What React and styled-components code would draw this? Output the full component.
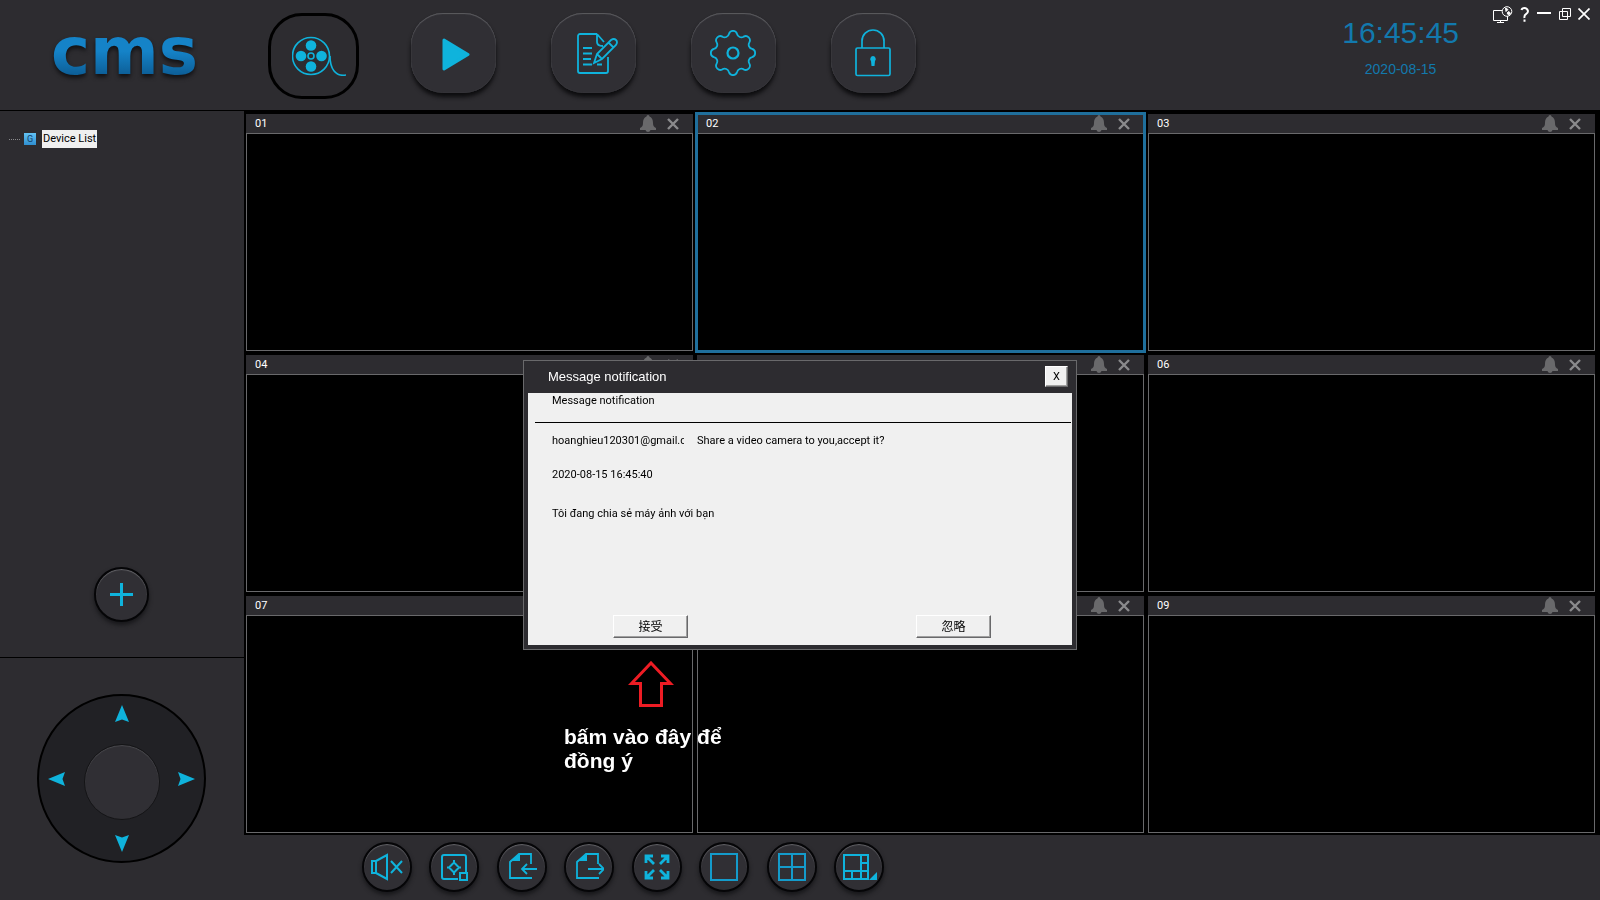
import React, { useState } from 'react';
import styled, { createGlobalStyle, css } from 'styled-components';

const channels = ['01', '02', '03', '04', '05', '06', '07', '08', '09'];

export default function App() {
    const [page, setPage] = useState('live');
    const [selected, setSelected] = useState('02');

    return (
        <>
            <GlobalStyle />
            <Page>
                <Header>
                    <Brand><Logo>cms</Logo></Brand>
                    <Nav>
                        {navItems.map((item) => (
                            <NavSlot key={item.id}>
                                <NavButton
                                    aria-label={item.label}
                                    $active={page === item.id}
                                    onClick={() => setPage(item.id)}
                                >
                                    {item.icon}
                                </NavButton>
                            </NavSlot>
                        ))}
                    </Nav>
                    <Clock>
                        <Time>16:45:45</Time>
                        <DateText>2020-08-15</DateText>
                    </Clock>
                    <WindowButtons>
                        <WindowButton aria-label="Remote"><RemoteIcon /></WindowButton>
                        <WindowButton aria-label="Help"><HelpIcon /></WindowButton>
                        <WindowButton aria-label="Minimize"><MinimizeIcon /></WindowButton>
                        <WindowButton aria-label="Restore"><RestoreIcon /></WindowButton>
                        <WindowButton aria-label="Close"><CloseIcon /></WindowButton>
                    </WindowButtons>
                </Header>

                <Content>
                    <Sidebar>
                        <DevicePanel>
                            <TreeItem>
                                <TreeLine />
                                <GroupIcon>G</GroupIcon>
                                <TreeLabel>Device List</TreeLabel>
                            </TreeItem>
                            <RoundButton $size={55} aria-label="Add device">
                                <svg width="23" height="23" viewBox="0 0 23 23" stroke="#0fb3dc" strokeWidth="3">
                                    <path d="M11.500 0v23M0 11.500h23" />
                                </svg>
                            </RoundButton>
                        </DevicePanel>
                        <PtzPanel>
                            <PtzWheel>
                                <PtzButton $area="up" aria-label="Up"><PtzArrow angle={0} /></PtzButton>
                                <PtzButton $area="left" aria-label="Left"><PtzArrow angle={270} /></PtzButton>
                                <PtzKnob />
                                <PtzButton $area="right" aria-label="Right"><PtzArrow angle={90} /></PtzButton>
                                <PtzButton $area="down" aria-label="Down"><PtzArrow angle={180} /></PtzButton>
                            </PtzWheel>
                        </PtzPanel>
                    </Sidebar>

                    <Main>
                        <VideoGrid>
                            {channels.map((name) => (
                                <Channel
                                    key={name}
                                    $selected={selected === name}
                                    onClick={() => setSelected(name)}
                                >
                                    <ChannelBar>
                                        <ChannelName>{name}</ChannelName>
                                        <ChannelButton aria-label={'Alarm ' + name}><BellIcon /></ChannelButton>
                                        <ChannelButton aria-label={'Close ' + name}><CrossIcon /></ChannelButton>
                                    </ChannelBar>
                                    <Video />
                                </Channel>
                            ))}
                        </VideoGrid>
                        <Toolbar>
                            {tools.map((tool) => (
                                <RoundButton key={tool.label} $size={50} aria-label={tool.label}>
                                    {tool.icon}
                                </RoundButton>
                            ))}
                        </Toolbar>
                    </Main>
                </Content>
            </Page>

            <Overlay>
                <Stack>
                    <Dialog role="dialog" aria-label="Message notification">
                        <DialogTitle>
                            <span>Message notification</span>
                            <DialogClose aria-label="Close dialog">X</DialogClose>
                        </DialogTitle>
                        <DialogBody>
                            <Subject>Message notification</Subject>
                            <Message>
                                <Request>
                                    <Sender>hoanghieu120301@gmail.com</Sender>
                                    <span>Share a video camera to you,accept it?</span>
                                </Request>
                                <span>2020-08-15 16:45:40</span>
                                <Note>Tôi đang chia sẻ máy ảnh với bạn</Note>
                            </Message>
                            <Actions>
                                <ClassicButton>接受</ClassicButton>
                                <ClassicButton>忽略</ClassicButton>
                            </Actions>
                        </DialogBody>
                    </Dialog>
                    <Hint>
                        <HintArrow width="46" height="46" viewBox="0 0 46 46" fill="none" stroke="#ed1c24" strokeWidth="3">
                            <path d="M23 2L42.500 22.500H33.500V44.500H12.500V22.500H3.500Z" />
                        </HintArrow>
                        <HintText>bấm vào đây để đồng ý</HintText>
                    </Hint>
                </Stack>
            </Overlay>
        </>
    );
}

const cyan = '#0fb3dc';

// outline of a wheel with eight rounded teeth
function gearPath(center, radius) {
    const point = (deg) => {
        const rad = (deg * Math.PI) / 180;
        return `${(center + radius * Math.cos(rad)).toFixed(2)} ${(center + radius * Math.sin(rad)).toFixed(2)}`;
    };
    let d = `M${point(-12)}`;
    for (let i = 0; i < 8; i++) {
        d += `A4.2 4.2 0 0 1 ${point(i * 45 + 12)}A4.4 4.4 0 0 0 ${point(i * 45 + 33)}`;
    }
    return d + 'Z';
}

function Icon({ size, width = 2, children }) {
    return (
        <svg width={size} height={size} viewBox={`0 0 ${size} ${size}`} fill="none" stroke={cyan} strokeWidth={width}>
            {children}
        </svg>
    );
}

const navItems = [
    {
        id: 'live', label: 'Live view', icon: (
            <svg width="54" height="40" viewBox="0 0 54 40" fill="none" stroke={cyan} strokeWidth="1.600">
                <circle cx="19" cy="20" r="18.500" />
                <circle cx="19" cy="20" r="3" />
                <g fill={cyan} stroke="none">
                    <circle cx="19" cy="9.500" r="5.300" />
                    <circle cx="19" cy="30.500" r="5.300" />
                    <circle cx="9" cy="20" r="5.300" />
                    <circle cx="29.500" cy="20" r="5.300" />
                </g>
                <path d="M38 20c0 12 5 21 16 19" />
            </svg>
        ),
    },
    {
        id: 'playback', label: 'Playback', icon: (
            <svg width="34" height="36" viewBox="0 0 34 36">
                <path d="M8 5L32 19.500L8 34Z" fill={cyan} stroke={cyan} strokeWidth="3" strokeLinejoin="round" />
            </svg>
        ),
    },
    {
        id: 'log', label: 'Log', icon: (
            <svg width="50" height="42" viewBox="-7 0 50 42" fill="none" stroke={cyan} strokeWidth="1.800">
                <path d="M22 2H5a2 2 0 0 0-2 2v35a2 2 0 0 0 2 2h26a2 2 0 0 0 2-2V25" />
                <path d="M22 2v8c0 3 2 4 6 4M22 2l7 8" />
                <path d="M8 16h9M8 21.500h9M8 27h8M8 32.500h9M22 32.500h5" />
                <path d="M19 31l3-9 14-14q3-2 5 0t0 5l-14 14zM22 22l5 5M33 10l6 6" />
            </svg>
        ),
    },
    {
        id: 'settings', label: 'Settings', icon: (
            <Icon size={46} width={1.8}>
                <path d={gearPath(23, 19.500)} />
                <circle cx="23" cy="23" r="5.500" strokeWidth="2.200" />
            </Icon>
        ),
    },
    {
        id: 'lock', label: 'Lock', icon: (
            <svg width="36" height="48" viewBox="0 0 36 48" fill="none" stroke={cyan} strokeWidth="1.700">
                <rect x="1" y="19" width="34" height="27.500" rx="1.500" />
                <path d="M7 19V12a11 11 0 0 1 22 0v7" />
                <path d="M18 27a3 3 0 0 1 2 5l-.5 5h-3l-.5-5a3 3 0 0 1 2-5z" fill={cyan} stroke="none" />
            </svg>
        ),
    },
];

const tools = [
    {
        label: 'Mute', icon: (
            <Icon size={32}>
                <path d="M1 10h4v12H1zM5 10l11-6v24L5 22M20 10l11 12M31 10L20 22" />
            </Icon>
        ),
    },
    {
        label: 'Locate', icon: (
            <Icon size={28}>
                <path d="M18 26H4q-2 0-2-2V4q0-2 2-2h20q2 0 2 2v15" />
                <path d="M14 9.500L19 14.500L14 19.500L9 14.500ZM14 7v3M14 19v3M7 14.500h3M18 14.500h3" />
                <rect x="20" y="20" width="7" height="7" />
            </Icon>
        ),
    },
    {
        label: 'Import', icon: (
            <Icon size={30} width={1.8}>
                <path d="M24 12V2H12L3 10V26H25" />
                <path d="M13 2v7H3z" fill={cyan} stroke="none" />
                <path d="M30 17H15M20 12l-5 5 5 5" />
            </Icon>
        ),
    },
    {
        label: 'Export', icon: (
            <Icon size={30} width={1.8}>
                <path d="M24 12V2H12L3 10V26H25" />
                <path d="M13 2v7H3z" fill={cyan} stroke="none" />
                <path d="M14 17H30M25 12l5 5-5 5" />
            </Icon>
        ),
    },
    {
        label: 'Full screen', icon: (
            <Icon size={28} width={2.8}>
                <path d="M3 10V3h7M3 3l8 8M18 3h7v7M25 3l-8 8M3 18v7h7M3 25l8-8M25 18v7h-7M25 25l-8-8" />
            </Icon>
        ),
    },
    {
        label: 'Single view', icon: (
            <Icon size={28}>
                <rect x="1" y="1" width="26" height="26" stroke="#149bcb" />
            </Icon>
        ),
    },
    {
        label: 'Four views', icon: (
            <Icon size={28}>
                <path d="M1 1h26v26H1zM14 1v26M1 14h26" stroke="#149bcb" />
            </Icon>
        ),
    },
    {
        label: 'More views', icon: (
            <svg width="36" height="26" viewBox="-2 0 36 26" fill="none" stroke={cyan} strokeWidth="2">
                <path d="M1 1h24v24H1zM18 1v24M1 17h24M18 9h7M9 17v8" />
                <path d="M34 18v8h-8z" fill={cyan} stroke="none" />
            </svg>
        ),
    },
];

function PtzArrow({ angle }) {
    return (
        <svg width="18" height="18" viewBox="0 0 18 18">
            <path d="M9 0L16 17L9 14.500L2 17Z" fill={cyan} transform={`rotate(${angle} 9 9)`} />
        </svg>
    );
}

function BellIcon() {
    return (
        <svg width="16" height="17" viewBox="0 0 16 17" fill="#69696b">
            <path d="M8 0q1.500 0 1.500 1.500C12 2.500 13 5 13 8c0 3 1 4 3 5v2h-5.500q-.5 2-2.500 2t-2.500-2H0v-2c2-1 3-2 3-5 0-3 1-5.500 3.500-6.500Q6.500 0 8 0z" />
        </svg>
    );
}

function CrossIcon() {
    return (
        <svg width="12" height="12" viewBox="0 0 12 12" stroke="#8a8a8c" strokeWidth="2.400">
            <path d="M1 1l10 10M11 1L1 11" />
        </svg>
    );
}

function RemoteIcon() {
    return (
        <svg width="20" height="17" viewBox="0 0 20 17" fill="none" stroke="#fff">
            <path d="M9 4.500H.5v10h14V10M7.500 14.500v2M4 16.500h7" />
            <circle cx="14" cy="5.500" r="4.800" />
            <path d="M12.500 2l2.500 1.500-2 2zM14 7l2-1.500 1.500 2-2 1.500z" fill="#fff" />
        </svg>
    );
}

function HelpIcon() {
    return (
        <svg width="10" height="15" viewBox="0 0 10 15" fill="none" stroke="#fff" strokeWidth="2">
            <path d="M1.500 3Q2 1 4.500 1T8 4Q8 6 6 7.200T4.500 11M4.500 12.500v2.200" />
        </svg>
    );
}

function MinimizeIcon() {
    return (
        <svg width="15" height="14" viewBox="0 0 15 14" stroke="#fff" strokeWidth="2">
            <path d="M0 6h14" />
        </svg>
    );
}

function RestoreIcon() {
    return (
        <svg width="12" height="12" viewBox="0 0 12 12" fill="none" stroke="#fff">
            <path d="M3.500 .5h8v8h-8zM.5 3.500h8v8h-8z" />
        </svg>
    );
}

function CloseIcon() {
    return (
        <svg width="12" height="12" viewBox="0 0 12 12" stroke="#fff" strokeWidth="1.700">
            <path d="M.5 .5l11 11M11.500 .5l-11 11" />
        </svg>
    );
}

const uiFont = 'Roboto, "Noto Sans CJK SC", sans-serif';

const GlobalStyle = createGlobalStyle`
  * {
    box-sizing: border-box;
  }
  body {
    margin: 0;
    background: #2d2c30;
    color: #fff;
    font-family: ${uiFont};
    font-size: 11px;
    line-height: 14px;
  }
  button {
    padding: 0;
    border: 0;
    background: none;
    color: inherit;
    font: inherit;
    cursor: pointer;
  }
  svg {
    display: block;
  }
`;

const Page = styled.div`
  display: flex;
  flex-direction: column;
  min-height: 100vh;
`;

const Header = styled.header`
  display: flex;
  height: 111px;
  border-bottom: 1px solid #000;
`;

const Brand = styled.div`
  display: flex;
  justify-content: center;
  width: 243px;
  padding: 12px 0 0 6px;
`;

const Logo = styled.div`
  font-family: "DejaVu Sans", sans-serif;
  font-size: 66px;
  font-weight: bold;
  line-height: 80px;
  color: transparent;
  background: linear-gradient(#1583c8 40%, #06406f 84%);
  background-clip: text;
  filter: drop-shadow(0 3px 2px #111114);
`;

const Nav = styled.nav`
  display: flex;
  padding-top: 13px;
`;

const NavSlot = styled.div`
  display: flex;
  justify-content: center;
  align-items: flex-start;
  width: 140px;
`;

const NavButton = styled.button`
  display: flex;
  justify-content: center;
  align-items: center;
  width: 85px;
  height: 80px;
  border-radius: 32px;
  background: #302f34;
  box-shadow: inset 0 1px 1px #5c5c60, inset 0 0 1px #55555a, 0 4px 4px #0c0c0e;

  ${(props) => props.$active && css`
    width: 91px;
    height: 86px;
    padding-left: 12px;
    border: 3px solid #000;
    border-radius: 34px;
    background: #2d2c30;
    box-shadow: none;
  `}
`;

const Clock = styled.div`
  display: flex;
  flex-direction: column;
  align-items: center;
  gap: 10px;
  margin-left: auto;
  padding-top: 16px;
  font-family: "Liberation Sans", Arial, sans-serif;
  color: #1279ad;
`;

const Time = styled.div`
  font-size: 30px;
  line-height: 34px;
`;

const DateText = styled.div`
  font-size: 14px;
  line-height: 18px;
`;

const WindowButtons = styled.div`
  display: flex;
  gap: 7px;
  padding: 6px 10px 0 34px;
`;

const WindowButton = styled.button`
  display: flex;
  align-items: center;
  height: 16px;
`;

const Content = styled.div`
  display: flex;
  flex: 1;
`;

const Sidebar = styled.aside`
  display: flex;
  flex-direction: column;
  width: 244px;
`;

const DevicePanel = styled.div`
  display: flex;
  flex: 1;
  flex-direction: column;
  justify-content: space-between;
  align-items: center;
  padding: 19px 1px 35px 0;
  border-bottom: 1px solid #000;
`;

const TreeItem = styled.div`
  display: flex;
  align-self: stretch;
  align-items: center;
  padding-left: 9px;
`;

const TreeLine = styled.div`
  width: 11px;
  margin-right: 4px;
  border-top: 1px dotted #8a8a8c;
`;

const GroupIcon = styled.div`
  width: 12px;
  height: 12px;
  margin-right: 6px;
  background: linear-gradient(#63c3f5, #2f8fd0);
  color: #123c66;
  font-size: 9px;
  line-height: 12px;
  text-align: center;
`;

const TreeLabel = styled.div`
  padding: 0 1px;
  background: #f0f0f0;
  color: #000;
  line-height: 18px;
`;

const RoundButton = styled.button`
  display: flex;
  flex: none;
  justify-content: center;
  align-items: center;
  width: ${(props) => props.$size}px;
  height: ${(props) => props.$size}px;
  border: 2px solid #050507;
  border-radius: 50%;
  background: #302f34;
  box-shadow: inset 0 1px 1px #66666a, 0 3px 4px #17171a;
`;

const PtzPanel = styled.div`
  display: flex;
  justify-content: center;
  align-items: flex-start;
  height: 242px;
  padding: 36px 1px 0 0;
`;

const PtzWheel = styled.div`
  display: grid;
  grid-template: "up up up" 1fr "left knob right" 76px "down down down" 1fr / 1fr 76px 1fr;
  width: 169px;
  height: 169px;
  padding: 9px;
  border: 2px solid #000;
  border-radius: 50%;
  background: #212125;
`;

const arrowPlace = {
    up: 'start center',
    left: 'center start',
    right: 'center end',
    down: 'end center',
};

const PtzButton = styled.button`
  grid-area: ${(props) => props.$area};
  place-self: ${(props) => arrowPlace[props.$area]};
`;

const PtzKnob = styled.div`
  grid-area: knob;
  height: 76px;
  margin-top: 3px;
  border: 1px solid #141416;
  border-radius: 50%;
  background: #302f34;
  box-shadow: inset 0 1px 1px #4a4a4e;
`;

const Main = styled.main`
  display: flex;
  flex: 1;
  flex-direction: column;
`;

const VideoGrid = styled.div`
  display: grid;
  flex: 1;
  grid-template-columns: repeat(3, 1fr);
  grid-auto-rows: 1fr;
  gap: 4px;
  padding: 3px 5px 2px 2px;
  background: #000;
`;

const Channel = styled.section`
  display: flex;
  flex-direction: column;
  outline: ${(props) => (props.$selected ? '3px solid #1f6f9c' : 'none')};
  outline-offset: -1px;
`;

const ChannelBar = styled.div`
  display: flex;
  align-items: center;
  gap: 11px;
  height: 19px;
  padding: 0 14px 0 9px;
  background: #2d2c30;
`;

const ChannelName = styled.span`
  flex: 1;
`;

const ChannelButton = styled.button`
  display: block;
`;

const Video = styled.div`
  flex: 1;
  border: 1px solid #69696b;
  background: #000;
`;

const Toolbar = styled.div`
  display: flex;
  justify-content: space-between;
  width: 522px;
  height: 65px;
  margin-left: 118px;
  padding-top: 7px;
`;

const Overlay = styled.div`
  position: fixed;
  inset: 0;
  display: flex;
  justify-content: center;
  align-items: flex-start;
  padding-top: 360px;
  pointer-events: none;
`;

const Stack = styled.div`
  width: 554px;
`;

const Dialog = styled.div`
  padding: 0 4px 4px;
  border: 1px solid #69696b;
  background: #2d2c30;
  pointer-events: auto;
`;

const DialogTitle = styled.div`
  display: flex;
  justify-content: space-between;
  align-items: center;
  height: 32px;
  padding: 0 4px 1px 20px;
  font-family: "Liberation Sans", Arial, sans-serif;
  font-size: 13px;
`;

const raised = css`
  border: 1px solid;
  border-color: #fff #69696b #69696b #fff;
  box-shadow: inset -1px -1px #a0a0a0;
  background: #f0f0f0;
  color: #000;
`;

const DialogClose = styled.button`
  ${raised}
  width: 23px;
  height: 21px;
  font-family: ${uiFont};
  font-size: 11px;
`;

const DialogBody = styled.div`
  display: flex;
  flex-direction: column;
  height: 252px;
  background: #f0f0f0;
  color: #000;
`;

const Subject = styled.div`
  height: 30px;
  margin: 0 1px 0 7px;
  padding: 1px 17px;
  border-bottom: 1px solid #000;
`;

const Message = styled.div`
  display: flex;
  flex: 1;
  flex-direction: column;
  gap: 20px;
  padding: 11px 24px 0;
`;

const Request = styled.div`
  display: flex;
  gap: 13px;
`;

const Sender = styled.span`
  width: 132px;
  overflow: hidden;
  white-space: nowrap;
`;

const Note = styled.span`
  padding-top: 5px;
`;

const Actions = styled.div`
  display: flex;
  justify-content: space-between;
  padding: 0 81px 7px 85px;
`;

const ClassicButton = styled.button`
  ${raised}
  width: 75px;
  height: 23px;
  padding-bottom: 2px;
  font-family: "Noto Sans CJK SC", sans-serif;
  font-size: 12px;
`;

const Hint = styled.div`
  width: 220px;
  padding: 11px 0 0 41px;
`;

const HintArrow = styled.svg`
  margin-left: 64px;
`;

const HintText = styled.p`
  margin: 18px 0 0;
  font-family: "Liberation Sans", Arial, sans-serif;
  font-size: 21px;
  font-weight: bold;
  line-height: 24px;
`;
